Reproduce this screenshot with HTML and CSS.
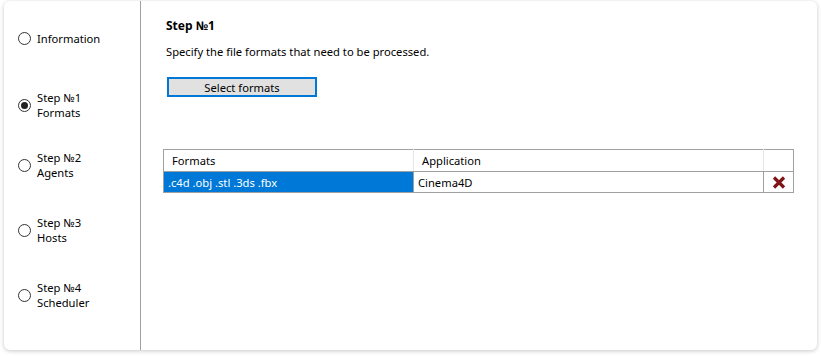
FILE: index.html
```html
<!DOCTYPE html>
<html lang="en">
<head>
    <meta charset="UTF-8">
    <title>Wizard - Step 1</title>
    <link rel="stylesheet" href="styles.css">
</head>
<body>
    <!-- wizard card -->
    <div class="wizard">
        <!-- left: step list -->
        <aside class="steps">
            <label class="step step-info">
                <span class="radio"></span>
                <span class="step-text">Information</span>
            </label>
            <label class="step step-1">
                <span class="radio checked"></span>
                <span class="step-text">Step №1<br>Formats</span>
            </label>
            <label class="step step-2">
                <span class="radio"></span>
                <span class="step-text">Step №2<br>Agents</span>
            </label>
            <label class="step">
                <span class="radio"></span>
                <span class="step-text">Step №3<br>Hosts</span>
            </label>
            <label class="step">
                <span class="radio"></span>
                <span class="step-text">Step №4<br>Scheduler</span>
            </label>
        </aside>

        <!-- right: step content -->
        <main class="content">
            <h1 class="title">Step №1</h1>
            <p class="desc">Specify the file formats that need to be processed.</p>
            <button class="select-btn">Select formats</button>

            <table class="grid">
                <thead>
                    <tr>
                        <th class="col-formats">Formats</th>
                        <th class="col-app">Application</th>
                        <th class="col-del"></th>
                    </tr>
                </thead>
                <tbody>
                    <tr>
                        <td class="selected">.c4d .obj .stl .3ds .fbx</td>
                        <td>Cinema4D</td>
                        <td class="del">
                            <svg width="14" height="13" viewBox="0 0 14 13">
                                <path d="M2 1.5 L12 11.5 M12 1.5 L2 11.5" stroke="#7f1416" stroke-width="3.2" stroke-linecap="butt"/>
                            </svg>
                        </td>
                    </tr>
                </tbody>
            </table>
        </main>
    </div>
</body>
</html>
```

FILE: styles.css
```css
* {
    margin: 0;
    padding: 0;
    box-sizing: border-box;
}

body {
    font-family: "Noto Sans", "Open Sans", sans-serif;
    font-size: 11.2px;
    color: #000;
    background-color: #fff;
    padding: 1px 4px 6px 4px;
}

/* card */
.wizard {
    display: flex;
    width: 813px;
    height: 349px;
    background-color: #fff;
    border-radius: 6px;
    box-shadow: 0 1px 4px rgba(0, 0, 0, 0.22);
}

/* step list */
.steps {
    width: 137px;
    border-right: 1px solid #a0a0a0;
    padding: 28px 0 0 14px;
    display: flex;
    flex-direction: column;
    gap: 35px;
}

.step {
    display: flex;
    align-items: center;
    gap: 6px;
    line-height: 15px;
    height: 30px;
}

.step-info {
    height: 18px;
    margin-bottom: 8px;
}

.step-2 {
    margin-top: -5px;
}

.radio {
    width: 13px;
    height: 13px;
    border: 1px solid #333;
    border-radius: 50%;
    display: flex;
    align-items: center;
    justify-content: center;
    flex-shrink: 0;
}

.radio.checked::after {
    content: "";
    width: 7px;
    height: 7px;
    border-radius: 50%;
    background-color: #222;
}

/* content */
.content {
    flex: 1;
    padding: 17px 23px 0 22px;
}

.title {
    font-size: 12px;
    font-weight: 700;
    line-height: 16px;
    margin-left: 3px;
}

.desc {
    margin: 10px 0 0 3px;
    line-height: 16px;
}

.select-btn {
    display: block;
    margin: 17px 0 0 4px;
    width: 150px;
    height: 20px;
    border: 2px solid #0078d7;
    background-color: #e1e1e1;
    font-family: inherit;
    font-size: 11.2px;
    color: #000;
}

/* table */
.grid {
    margin-top: 52px;
    width: 631px;
    border-collapse: collapse;
    border: 1px solid #a0a0a0;
}

.grid th {
    height: 22px;
    font-weight: 400;
    text-align: left;
    padding: 0 8px;
    border-left: 1px solid #e5e5e5;
    border-bottom: 1px solid #a0a0a0;
}

.grid th:first-child {
    border-left: none;
}

.col-formats {
    width: 250px;
}

.col-app {
    width: 350px;
}

.grid td {
    height: 21px;
    padding: 0 4px;
    border-left: 1px solid #a0a0a0;
}

.grid td:first-child {
    border-left: none;
}

.grid td.selected {
    background-color: #0078d7;
    color: #fff;
}

.grid td.del {
    text-align: center;
    padding: 0;
}

.grid td.del svg {
    display: block;
    margin: 0 auto;
}
```
